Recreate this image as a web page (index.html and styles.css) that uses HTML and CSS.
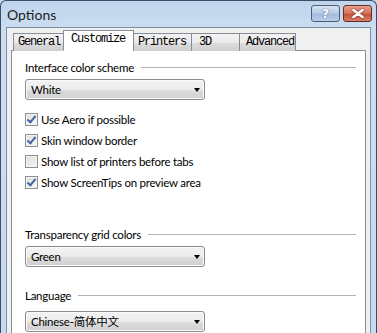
FILE: index.html
```html
<!DOCTYPE html>
<html>
<head>
<meta charset="utf-8">
<link rel="stylesheet" href="styles.css">
</head>
<body>
<div class="window">
  <div class="titlebar">
    <span class="title">Options</span>
    <div class="tbtns">
      <div class="tbtn help">?</div>
      <div class="tbtn close">
        <svg width="12" height="9" viewBox="0 0 12 9"><path d="M1.5 1 L10.5 8 M10.5 1 L1.5 8" stroke="#fff" stroke-width="2.4" stroke-linecap="round"/></svg>
      </div>
    </div>
  </div>
  <div class="client">
    <div class="tabs">
      <div class="tab first">General</div>
      <div class="tab active">Customize</div>
      <div class="tab">Printers</div>
      <div class="tab t3d">3D</div>
      <div class="tab adv">Advanced</div>
    </div>
    <div class="panel">
      <div class="group">
        <span>Interface color scheme</span><i class="rule"></i>
      </div>
      <div class="combo"><span>White</span><i class="arrow"></i></div>

      <div class="checks">
        <label class="chk"><span class="box on"></span>Use Aero if possible</label>
        <label class="chk"><span class="box on"></span>Skin window border</label>
        <label class="chk"><span class="box"></span>Show list of printers before tabs</label>
        <label class="chk"><span class="box on"></span>Show ScreenTips on preview area</label>
      </div>

      <div class="group g2">
        <span>Transparency grid colors</span><i class="rule"></i>
      </div>
      <div class="combo"><span>Green</span><i class="arrow"></i></div>

      <div class="group g3">
        <span>Language</span><i class="rule"></i>
      </div>
      <div class="combo c3"><span>Chinese-简体中文</span><i class="arrow"></i></div>
    </div>
  </div>
</div>
</body>
</html>
```

FILE: styles.css
```css
* { box-sizing: border-box; }
html, body {
  margin: 0;
  padding: 0;
  width: 377px;
  height: 333px;
  overflow: hidden;
  background: #c9dbef;
}
.window {
  width: 377px;
  height: 340px;
  border: 1px solid #3c4f66;
  border-bottom: none;
  border-radius: 6px 6px 0 0;
  background: linear-gradient(#bfd4ec, #cddef1 30px, #c6daf0);
  display: flex;
  flex-direction: column;
  font-family: Lato, "Noto Sans CJK SC", sans-serif;
}
.titlebar {
  height: 26px;
  display: flex;
  align-items: flex-start;
  justify-content: space-between;
  padding: 0 4px 0 6px;
}
.title {
  font-size: 14px;
  line-height: 17px;
  margin-top: 5px;
  color: #1e1e1e;
}
.tbtns {
  display: flex;
  gap: 3px;
  margin-top: 4px;
}
.tbtn {
  width: 29px;
  height: 17px;
  border: 1px solid #4d5d74;
  border-radius: 3px;
  display: flex;
  align-items: center;
  justify-content: center;
}
.help {
  background: linear-gradient(#d7e5f4, #b2c8e2 50%, #9fb9da 51%, #b9d0ea);
  color: #fff;
  font-family: "DejaVu Sans", sans-serif;
  font-size: 13px;
  font-weight: bold;
  text-shadow: 0 0 1px #4a6185, 0 0 1px #4a6185;
}
.close {
  background: linear-gradient(#e8a291, #d2705a 50%, #c34d35 51%, #d7806b);
  border-color: #6a2b20;
}
.close svg { filter: drop-shadow(0 0 1px #6a2015); }
.client {
  flex: 1;
  margin: 0 5px 0 5px;
  border: 1px solid #7d8fa5;
  border-bottom: none;
  background: #f0f0f0;
  padding: 3px 0 0 4px;
  display: flex;
  flex-direction: column;
}
.tabs {
  display: flex;
  align-items: flex-end;
  height: 20px;
  padding-left: 2px;
  position: relative;
  z-index: 1;
  margin-bottom: -1px;
}
.tab {
  height: 18px;
  border: 1px solid #898c95;
  border-bottom: none;
  margin-left: -1px;
  background: linear-gradient(#f2f2f2, #ebebeb 50%, #dddddd 51%, #cfcfcf);
  font-family: "Liberation Mono", monospace;
  font-size: 12px;
  letter-spacing: -1.2px;
  line-height: 17px;
  padding: 0 0 0 4px;
  color: #000;
  width: 59px;
  white-space: nowrap;
}
.tab.first { width: 51px; margin-left: 0; }
.tab.active {
  width: 71px;
  background: #fff;
  border-bottom: 1px solid #fff;
  padding-left: 7px;
  line-height: 17px;
  height: 21px;
}
.tab.t3d { width: 49px; padding-left: 7px; }
.tab.adv { width: 57px; padding-left: 6px; }
.panel {
  flex: 1;
  width: 355px;
  background: #fff;
  border: 1px solid #898c95;
  padding: 9px 9px 0 13px;
  display: flex;
  flex-direction: column;
  font-size: 11.5px;
  letter-spacing: -0.25px;
  color: #000;
}
.group {
  display: flex;
  align-items: center;
  gap: 7px;
  height: 15px;
  line-height: 15px;
  white-space: nowrap;
}
.rule {
  flex: 1;
  height: 1px;
  background: #b4b4b4;
}
.g2 { margin-top: 34px; }
.g3 { margin-top: 21px; }
.combo {
  margin-top: 4px;
  width: 180px;
  height: 21px;
  border: 1px solid #8b8b8b;
  border-radius: 3px;
  background: linear-gradient(#f3f3f3, #ebebeb 50%, #dddddd 51%, #d0d0d0);
  box-shadow: inset 0 0 0 1px #fafafa;
  display: flex;
  align-items: center;
  justify-content: space-between;
  padding: 0 4px 0 5px;
  line-height: 15px;
}
.c3 { margin-top: 8px; }
.arrow {
  width: 0;
  height: 0;
  border-left: 3.5px solid transparent;
  border-right: 3.5px solid transparent;
  border-top: 4px solid #000;
}
.checks {
  margin-top: 9px;
  display: flex;
  flex-direction: column;
}
.chk {
  height: 21px;
  display: flex;
  align-items: center;
  gap: 3px;
  white-space: nowrap;
}
.box {
  width: 13px;
  height: 13px;
  border: 1px solid #8e8f8f;
  background: linear-gradient(135deg, #dcdcdc, #f8f8f8);
  box-shadow: inset 0 0 0 1px #f4f4f4;
  position: relative;
  flex: none;
}
.box.on::after {
  content: "";
  position: absolute;
  left: 3px;
  top: 0px;
  width: 3px;
  height: 7px;
  border-right: 2px solid #4a64a0;
  border-bottom: 2px solid #4a64a0;
  transform: rotate(40deg);
}
```
